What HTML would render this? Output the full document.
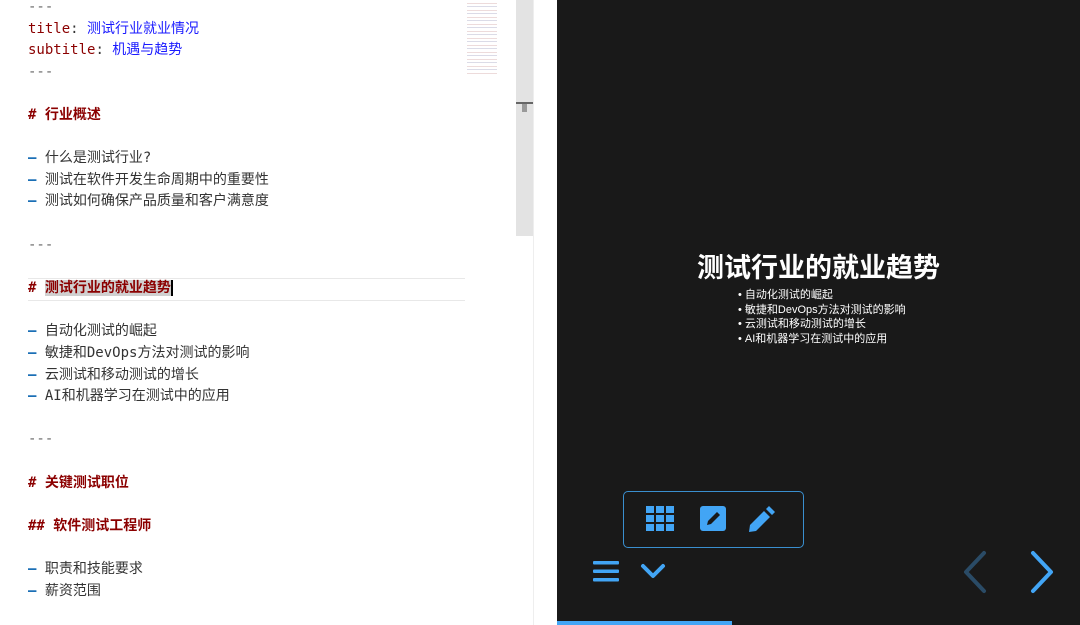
<!DOCTYPE html>
<html><head><meta charset="utf-8"><style>
body{margin:0;width:1080px;height:625px;overflow:hidden;background:#fff;position:relative;font-family:"DejaVu Sans Mono","Liberation Mono","Noto Sans CJK SC",monospace;}
.ed{position:absolute;left:0;top:-3px;width:516px;}
.l{position:absolute;left:28px;height:21.6px;line-height:21.6px;font-size:14px;color:#333;white-space:pre;}
.k{color:#8b0000}.v{color:#1a1aff}.d{color:#1a6fb5;font-weight:bold}.h{color:#8b0000;font-weight:bold}
.g{color:#666}
.sb{position:absolute;left:516px;top:0;width:17px;height:236px;background:#e3e3e3}
.dark{position:absolute;left:557px;top:0;width:523px;height:625px;background:#191919;font-family:"Liberation Sans","Noto Sans CJK SC",sans-serif;}
</style></head><body>
<div class="ed">
<div class="l g" style="top:0">---</div>
<div class="l" style="top:21.6px"><span class="k">title</span>: <span class="v">测试行业就业情况</span></div>
<div class="l" style="top:43.2px"><span class="k">subtitle</span>: <span class="v">机遇与趋势</span></div>
<div class="l g" style="top:64.8px">---</div>
<div class="l h" style="top:108px"># 行业概述</div>
<div class="l" style="top:151.2px"><span class="d">–</span> 什么是测试行业?</div>
<div class="l" style="top:172.8px"><span class="d">–</span> 测试在软件开发生命周期中的重要性</div>
<div class="l" style="top:194.4px"><span class="d">–</span> 测试如何确保产品质量和客户满意度</div>
<div class="l g" style="top:237.6px">---</div>
<div style="position:absolute;left:28px;top:281px;width:437px;height:21px;border-top:1px solid #e8e8e8;border-bottom:1px solid #e8e8e8"></div>
<div class="l h" style="top:281.2px"># <span style="background:#d0d0d0">测试行业的就业趋势</span><span style="border-left:2px solid #000"></span></div>
<div class="l" style="top:324.4px"><span class="d">–</span> 自动化测试的崛起</div>
<div class="l" style="top:346px"><span class="d">–</span> 敏捷和DevOps方法对测试的影响</div>
<div class="l" style="top:367.6px"><span class="d">–</span> 云测试和移动测试的增长</div>
<div class="l" style="top:389.2px"><span class="d">–</span> AI和机器学习在测试中的应用</div>
<div class="l g" style="top:432.4px">---</div>
<div class="l h" style="top:475.6px"># 关键测试职位</div>
<div class="l h" style="top:518.8px">## 软件测试工程师</div>
<div class="l" style="top:562px"><span class="d">–</span> 职责和技能要求</div>
<div class="l" style="top:583.6px"><span class="d">–</span> 薪资范围</div>
</div>
<div style="position:absolute;left:467px;top:0;width:30px;height:75px;opacity:.35;background:repeating-linear-gradient(#fff 0 3px,#c99 3px 4px,#fff 4px 6px,#99b 6px 7px)"></div>
<div class="sb"></div>
<div style="position:absolute;left:516px;top:102px;width:17px;height:2px;background:#666"></div>
<div style="position:absolute;left:522px;top:104px;width:5px;height:8px;background:#999"></div>
<div style="position:absolute;left:533px;top:0;width:1px;height:625px;background:#eee"></div>
<div class="dark">
<div style="position:absolute;left:0;width:523px;top:246px;text-align:center;color:#fff;font-size:27px;font-weight:bold">测试行业的就业趋势</div>
<div style="position:absolute;left:181px;top:288px;color:#fff;font-size:11px;line-height:14.5px">
• 自动化测试的崛起<br>• 敏捷和DevOps方法对测试的影响<br>• 云测试和移动测试的增长<br>• AI和机器学习在测试中的应用</div>
<div style="position:absolute;left:66px;top:491px;width:179px;height:55px;border:1px solid #3a8fcf;border-radius:5px"></div>
<svg style="position:absolute;left:0;top:480px" width="523" height="145">
<g fill="#42a5f5">
<rect x="89" y="26" width="8" height="7"/><rect x="99" y="26" width="8" height="7"/><rect x="109" y="26" width="8" height="7"/>
<rect x="89" y="35" width="8" height="7"/><rect x="99" y="35" width="8" height="7"/><rect x="109" y="35" width="8" height="7"/>
<rect x="89" y="44" width="8" height="7"/><rect x="99" y="44" width="8" height="7"/><rect x="109" y="44" width="8" height="7"/>
<rect x="143" y="26" width="26" height="25" rx="3"/>
<path d="M192 52 L193 45 L207 31 L213 37 L199 51 Z M209 29 L212 26 L218 32 L215 35 Z"/>
<rect x="36" y="81" width="26" height="3.5" rx="1"/><rect x="36" y="89.5" width="26" height="3.5" rx="1"/><rect x="36" y="98" width="26" height="3.5" rx="1"/>
<rect x="0" y="141" width="175" height="4"/>
</g>
<path d="M150 45 L151 41 L160 32 L163 35 L154 44 Z" fill="#191919"/>
<g fill="none" stroke-width="4" stroke-linecap="round" stroke-linejoin="round">
<path d="M86 86 L96 96 L106 86" stroke="#42a5f5"/>
<path d="M427 73 L409 92 L427 111" stroke="#2a4b66"/>
<path d="M476 73 L494 92 L476 111" stroke="#42a5f5"/>
</g>
</svg>
</div>
</body></html>
